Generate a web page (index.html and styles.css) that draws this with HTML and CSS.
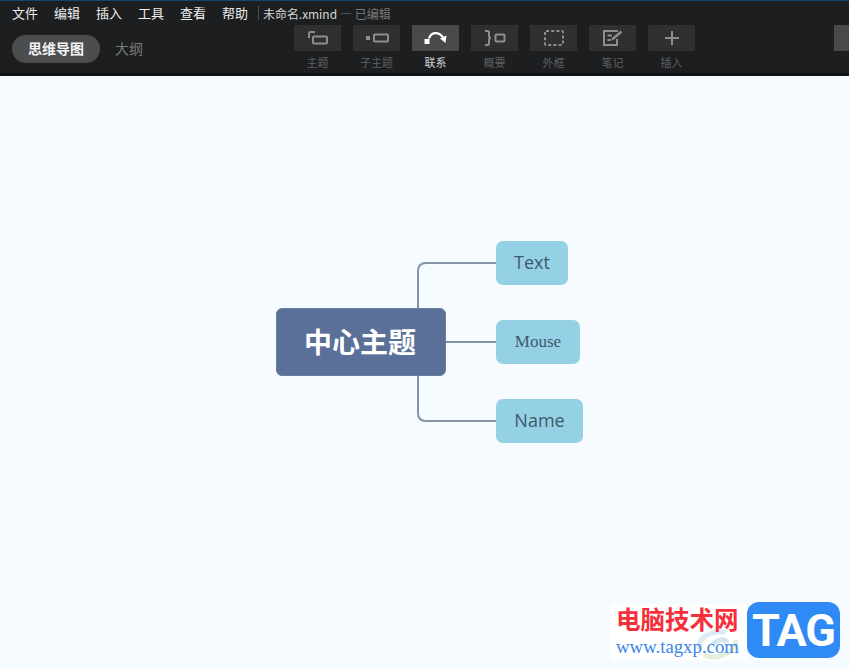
FILE: index.html
```html
<!DOCTYPE html>
<html lang="zh-CN">
<head>
<meta charset="utf-8">
<title>未命名.xmind</title>
<link rel="stylesheet" href="styles.css">
</head>
<body>
<header class="chrome">
  <nav class="menubar">
    <span class="menu">文件</span><span class="menu">编辑</span><span class="menu">插入</span><span class="menu">工具</span><span class="menu">查看</span><span class="menu">帮助</span>
    <span class="sep"></span>
    <span class="docname">未命名.xmind</span><span class="docstate">— 已编辑</span>
  </nav>
  <div class="toolbar">
    <div class="tabs">
      <span class="tab tab-on">思维导图</span><span class="tab">大纲</span>
    </div>
    <div class="tools">
      <div class="tool"><span class="tool-btn"><svg width="22" height="16" viewBox="0 0 22 16" fill="none" stroke="#8c8e8f" stroke-width="2"><path d="M8 2H3.500Q2 2 2 3.500V8"/><rect x="6" y="6.500" width="14" height="7" rx="1"/></svg></span><span class="tool-label">主题</span></div>
      <div class="tool"><span class="tool-btn"><svg width="24" height="10" viewBox="0 0 24 10" fill="none" stroke="#8c8e8f" stroke-width="2"><rect x="1" y="3" width="4" height="4" fill="#8c8e8f" stroke="none"/><rect x="9" y="1.500" width="14" height="7" rx="1"/></svg></span><span class="tool-label">子主题</span></div>
      <div class="tool tool-on"><span class="tool-btn"><svg width="24" height="16" viewBox="0 0 24 16" fill="none"><path d="M5 8.500C7 2.500 14 0.500 19.500 8" stroke="#fff" stroke-width="2.200"/><rect x="0.500" y="9" width="5" height="5" fill="#fff"/><path d="M16 8.500L22.500 5.500L21.500 13Z" fill="#fff"/></svg></span><span class="tool-label">联系</span></div>
      <div class="tool"><span class="tool-btn"><svg width="22" height="16" viewBox="0 0 22 16" fill="none" stroke="#8c8e8f" stroke-width="2"><path d="M1 1H3.500Q5 1 5 2.500V6Q5 8 7 8Q5 8 5 10V13.500Q5 15 3.500 15H1"/><rect x="11.500" y="4.500" width="9" height="7" rx="1"/></svg></span><span class="tool-label">概要</span></div>
      <div class="tool"><span class="tool-btn"><svg width="20" height="16" viewBox="0 0 20 16" fill="none" stroke="#8c8e8f" stroke-width="2" stroke-dasharray="3 2.200"><rect x="1" y="1" width="18" height="14" rx="1"/></svg></span><span class="tool-label">外框</span></div>
      <div class="tool"><span class="tool-btn"><svg width="20" height="16" viewBox="0 0 20 16" fill="none" stroke="#8c8e8f" stroke-width="2"><path d="M15 1H1V15H14V9"/><path d="M4.500 5.500H9M4.500 10H8"/><path d="M9 9.500L18.500 1.500" stroke-width="2.400"/></svg></span><span class="tool-label">笔记</span></div>
      <div class="tool"><span class="tool-btn"><svg width="14" height="14" viewBox="0 0 14 14" stroke="#8c8e8f" stroke-width="2"><path d="M7 0V14M0 7H14"/></svg></span><span class="tool-label">插入</span></div>
    </div>
    <span class="edge-btn"></span>
  </div>
</header>
<main class="canvas">
  <svg class="links" width="849" height="593" viewBox="0 0 849 593" fill="none" stroke="#8494a6" stroke-width="2">
    <path d="M418 233V195Q418 187 426 187H497"/>
    <path d="M445 266H497"/>
    <path d="M418 300V337Q418 345 426 345H497"/>
  </svg>
  <div class="node root">中心主题</div>
  <div class="node sub sub-text">Text</div>
  <div class="node sub sub-mouse">Mouse</div>
  <div class="node sub sub-name">Name</div>
  <div class="mark">
    <div class="mark-text">
      <svg class="mark-swirl" width="46" height="34" viewBox="0 0 46 34" fill="none" stroke-width="5">
        <path d="M32 4C14 2 3 12 6 21" stroke="#dceaf4"/>
        <path d="M10 27C24 33 42 24 42 12" stroke="#e4f1da"/>
        <path d="M18 17C24 10 32 11 33 15" stroke="#d6e6f0"/>
      </svg>
      <span class="mark-cn">电脑技术网</span>
      <span class="mark-url">www.tagxp.com</span>
    </div>
    <div class="mark-tag">TAG</div>
  </div>
</main>
</body>
</html>
```
FILE: styles.css
```css
* { box-sizing: border-box; }
html, body { margin: 0; height: 100%; }
body {
  width: 849px;
  height: 669px;
  overflow: hidden;
  display: flex;
  flex-direction: column;
  background: #f6fbff;
  font-family: "Noto Sans CJK SC", "Liberation Sans", sans-serif;
}
.chrome {
  height: 76px;
  flex: none;
  background: #1c1e20;
  border-top: 1px solid #14456b;
  border-bottom: 3px solid #111214;
}
.menubar {
  height: 24px;
  display: flex;
  align-items: center;
  padding-left: 12px;
  font-size: 13px;
  color: #eceded;
}
.menu { width: 42px; flex: none; line-height: 22px; }
.sep { width: 1px; height: 14px; background: #4a4c4e; margin: 0 4px 0 -6px; }
.docname { font-size: 12px; letter-spacing: -0.050px; color: #d5d6d6; }
.docstate { font-size: 12px; color: #77797b; margin-left: 3px; }
.toolbar { display: flex; height: 48px; position: relative; }
.tabs { display: flex; align-items: flex-start; padding: 10px 0 0 12px; width: 294px; flex: none; }
.tab {
  height: 28px;
  line-height: 27px;
  font-size: 14px;
  color: #77797a;
  padding: 0 15px;
}
.tab-on {
  width: 88px;
  padding: 0;
  text-align: center;
  border-radius: 14px;
  background: #4b4d4f;
  color: #f4f4f4;
  font-weight: 700;
}
.tools { display: flex; gap: 12px; }
.tool { width: 47px; display: flex; flex-direction: column; align-items: center; }
.tool-btn {
  width: 47px;
  height: 26px;
  display: flex;
  align-items: center;
  justify-content: center;
  background: #2e3032;
  border-radius: 1px;
}
.tool-label { font-size: 11px; line-height: 14px; margin-top: 4px; color: #5e6062; }
.tool-on .tool-btn { background: #48494b; }
.tool-on .tool-label { color: #d6d6d6; }
.edge-btn {
  width: 15px;
  height: 26px;
  margin-left: auto;
  background: #48494b;
}
.canvas { flex: 1; position: relative; background: #f6fbff; overflow: hidden; }
.links { position: absolute; left: 0; top: 0; }
.node { position: absolute; display: flex; align-items: center; justify-content: center; }
.root {
  left: 276px;
  top: 232px;
  width: 170px;
  height: 68px;
  padding: 0 2px 3px 0;
  background: #5a7098;
  border: 1px solid #6a7ea3;
  border-radius: 6px;
  color: #fff;
  font-size: 28px;
  font-weight: 700;
}
.sub {
  background: #95d1e4;
  border-radius: 7px;
  height: 44px;
  padding-bottom: 2px;
  color: #3f596c;
  font-family: "Open Sans", sans-serif;
  font-size: 18px;
}
.sub-text { left: 496px; top: 165px; width: 72px; }
.sub-mouse {
  left: 496px;
  top: 244px;
  width: 84px;
  padding-bottom: 1px;
  font-family: "Liberation Serif", serif;
  font-size: 17px;
}
.sub-name { left: 496px; top: 323px; width: 87px; }
.mark {
  position: absolute;
  left: 610px;
  top: 527px;
  width: 230px;
  height: 60px;
  display: flex;
}
.mark-text {
  position: relative;
  width: 137px;
  height: 56px;
  margin-top: 1px;
  background: #fff;
  padding-left: 6px;
  display: flex;
  flex-direction: column;
}
.mark-cn {
  position: relative;
  font-size: 24.500px;
  line-height: 29px;
  color: #f5303a;
  font-weight: 700;
  white-space: nowrap;
}
.mark-url {
  position: relative;
  font-family: "Liberation Serif", serif;
  font-size: 18.800px;
  line-height: 22px;
  margin-top: 3px;
  color: #3a86e8;
  white-space: nowrap;
}
.mark-swirl { position: absolute; left: 84px; top: 24px; }
.mark-tag {
  position: relative;
  width: 93px;
  height: 56px;
  margin-top: -1px;
  background: #2f8af5;
  border-radius: 12px;
  color: #fff;
  font-family: Roboto, "Liberation Sans", sans-serif;
  font-size: 45px;
  font-weight: 700;
  letter-spacing: -1px;
  line-height: 58px;
  text-align: center;
}
```
